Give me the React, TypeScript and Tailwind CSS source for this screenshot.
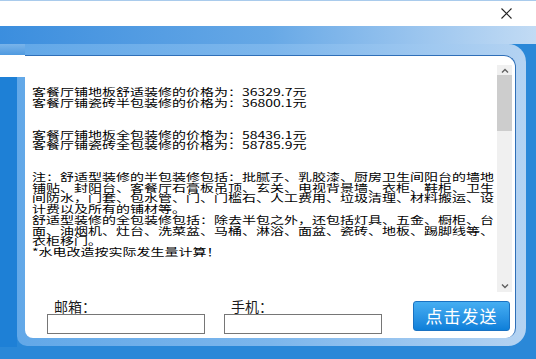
const font = { fontFamily: '"Noto Sans CJK SC", "Noto Sans", sans-serif' };

const pricesA = [
  "客餐厅铺地板舒适装修的价格为：36329.7元",
  "客餐厅铺瓷砖半包装修的价格为：36800.1元",
];

const pricesB = [
  "客餐厅铺地板全包装修的价格为：58436.1元",
  "客餐厅铺瓷砖全包装修的价格为：58785.9元",
];

const notes = [
  "注：舒适型装修的半包装修包括：批腻子、乳胶漆、厨房卫生间阳台的墙地",
  "铺贴、封阳台、客餐厅石膏板吊顶、玄关、电视背景墙、衣柜、鞋柜、卫生",
  "间防水，门套、包水管、门、门槛石、人工费用、垃圾清理、材料搬运、设",
  "计费以及所有的铺材等。",
  "舒适型装修的全包装修包括：除去半包之外，还包括灯具、五金、橱柜、台",
  "面、油烟机、灶台、洗菜盆、马桶、淋浴、面盆、瓷砖、地板、踢脚线等、",
  "衣柜移门。",
  "*水电改造按实际发生量计算！",
];

function Lines({ items, className }: { items: string[]; className?: string }) {
  return (
    <div className={className}>
      {items.map((t) => (
        <div key={t} className="h-[10.7px] flex items-center">
          <span className="whitespace-nowrap text-[14px] leading-[10px] text-black scale-y-[0.74] origin-center">
            {t}
          </span>
        </div>
      ))}
    </div>
  );
}

function Chevron({ up }: { up?: boolean }) {
  return (
    <svg width="8" height="5" viewBox="0 0 8 5">
      <path
        d={up ? "M1 4.5 L4 1.5 L7 4.5" : "M1 0.5 L4 3.5 L7 0.5"}
        fill="none"
        stroke="#606060"
        strokeWidth="1.4"
      />
    </svg>
  );
}

function Field({ label, className }: { label: string; className?: string }) {
  return (
    <div className={`flex flex-col w-[158px] ${className ?? ""}`}>
      <span className="ml-[7px] mt-[6px] text-[14px] leading-[16px] text-[#1a1a1a]">{label}</span>
      <div className="h-[20px] border border-[#767676] bg-white" />
    </div>
  );
}

export default function App() {
  return (
    <div className="relative w-[536px] h-[359px] overflow-hidden bg-[#2a88d8]" style={font}>
      <div className="h-[26px] bg-white border-t border-[#a9cbec] flex items-center justify-end pr-[24px]">
        <svg width="11" height="11" viewBox="0 0 11 11">
          <path d="M0.5 0.5 L10.5 10.5 M10.5 0.5 L0.5 10.5" stroke="#222" strokeWidth="1.1" />
        </svg>
      </div>
      <div className="h-[18px] bg-gradient-to-r from-[#3b8ede] via-[#66a8e6] to-[#c2dbf4]" />

      <div className="ml-[17px] w-[509px] h-[302px] rounded-r-[18px] rounded-bl-[10px] bg-gradient-to-r from-[#62a8e8] via-[#7cb6ec] to-[#b4d3f2] pt-[11px] pr-[10px] pb-[8px] pl-[8px]">
        <div className="h-full bg-white rounded-tr-[12px] rounded-br-[10px] rounded-bl-[8px] border-t border-r border-[#2f6fb8] flex flex-col">
          <div className="flex h-[236px] pt-[9px]">
            <div className="flex-1 pl-[7px]">
              <Lines items={pricesA} className="mt-[22px]" />
              <Lines items={pricesB} className="mt-[21px]" />
              <Lines items={notes} className="mt-[21px]" />
            </div>
            <div className="w-[15px] mr-[3px] flex flex-col bg-[#f0f0f0]">
              <div className="h-[10px] flex items-center justify-center">
                <Chevron up />
              </div>
              <div className="h-[56px] bg-[#cdcdcd]" />
              <div className="flex-1" />
              <div className="h-[12px] flex items-center justify-center">
                <Chevron />
              </div>
            </div>
          </div>

          <div className="flex pl-[22px] pr-[5px]">
            <Field label="邮箱：" />
            <Field label="手机：" className="ml-[19px]" />
            <button className="ml-auto mt-[9px] w-[97px] h-[30px] rounded-[3px] border border-[#1a72c2] bg-gradient-to-b from-[#45aef2] to-[#0c7fd9] text-white text-[17px] leading-[28px] tracking-[1px]">
              点击发送
            </button>
          </div>
        </div>
      </div>

      <div className="absolute left-0 top-[44px] w-[25px] flex flex-col">
        <div className="h-[11px] bg-gradient-to-b from-[#79b4ea] to-[#4f9ae0]" />
        <div className="h-[22px] bg-white" />
      </div>
      <div className="absolute left-0 top-[77px] w-[17px] h-[270px] bg-[#1e80d6]" />
    </div>
  );
}
